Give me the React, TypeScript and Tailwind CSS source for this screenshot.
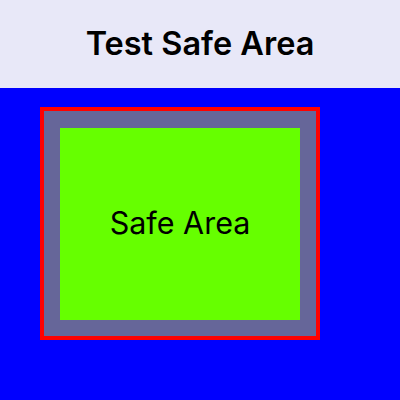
import React from 'react';

export default function App() {
  return (
    <div
      className="flex h-[400px] w-[400px] flex-col bg-[#0000ff]"
      style={{ fontFamily: 'Inter, "Noto Sans", sans-serif' }}
    >
      <header className="flex h-[88px] shrink-0 items-center justify-center bg-[#e8e8f8]">
        <h1 className="text-[32.5px] font-semibold text-black">Test Safe Area</h1>
      </header>
      <main className="flex-1 pl-[40px] pt-[19px]">
        <div className="h-[233px] w-[280px] border-4 border-[#ff0000] bg-[#666699] px-4 pb-4 pt-[17px]">
          <div className="flex h-full w-full items-center justify-center bg-[#66ff00]">
            <span className="-mt-[2px] text-[30.5px] text-black">Safe Area</span>
          </div>
        </div>
      </main>
    </div>
  );
}
